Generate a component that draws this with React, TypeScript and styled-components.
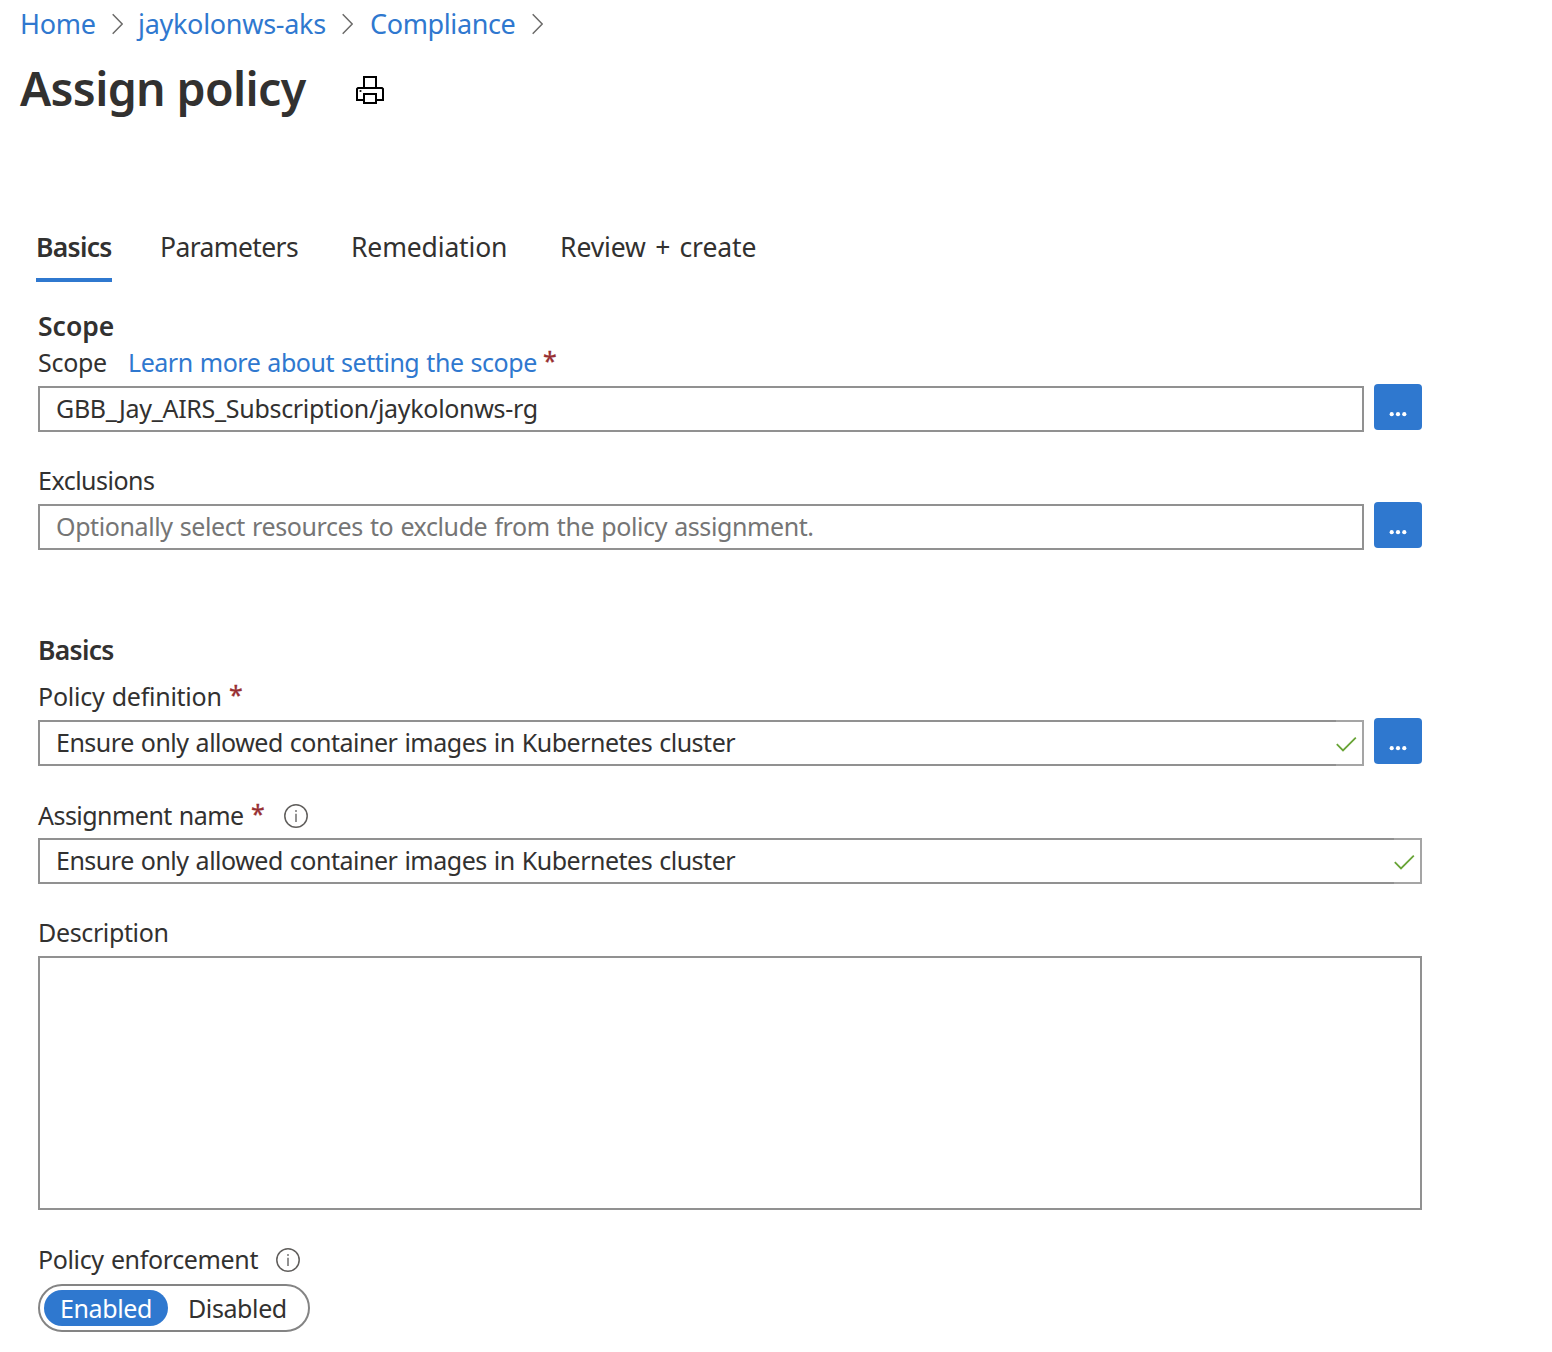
import React from 'react';
import styled, { createGlobalStyle } from 'styled-components';

const blue = '#2f78cf';
const ink = '#323130';

const GlobalStyle = createGlobalStyle`
  * { box-sizing: border-box; }
  body {
    margin: 0;
    background: #fff;
    color: ${ink};
    font-family: "Noto Sans", "Open Sans", sans-serif;
    font-size: 25px;
  }
`;

const Page = styled.main`
  width: 1552px;
  height: 1352px;
  overflow: hidden;
`;

const Breadcrumbs = styled.nav`
  display: flex;
  align-items: center;
  height: 48px;
  padding-left: 20px;
`;

const Crumb = styled.a<{ $width: number; $spacing?: number }>`
  width: ${p => p.$width}px;
  flex: none;
  color: ${blue};
  font-size: 27px;
  line-height: 48px;
  letter-spacing: ${p => p.$spacing ?? 0}px;
  white-space: nowrap;
`;

const Chevron = styled.svg<{ $gap: number }>`
  flex: none;
  width: 11px;
  height: 22px;
  margin-right: ${p => p.$gap}px;
  fill: none;
  stroke: #6b6a69;
  stroke-width: 1.5;
`;

const Header = styled.header`
  display: flex;
  align-items: center;
  height: 84px;
  padding-left: 20px;
`;

const Title = styled.h1`
  margin: 0;
  padding-bottom: 4px;
  width: 336px;
  font-size: 46.5px;
  font-weight: 600;
  line-height: 80px;
  letter-spacing: -0.65px;
  white-space: nowrap;
`;

const PrintIcon = styled.svg`
  width: 28px;
  height: 28px;
  fill: none;
  stroke: #000;
  stroke-width: 2;
`;

const TabList = styled.div`
  display: flex;
  margin-top: 92px;
  padding-left: 36px;
`;

const Tab = styled.div<{ $width: number; $gap: number; $spacing?: number; $active?: boolean }>`
  width: ${p => p.$width}px;
  height: 58px;
  margin-right: ${p => p.$gap}px;
  border-bottom: 4px solid ${p => (p.$active ? blue : 'transparent')};
  font-size: 26.5px;
  font-weight: ${p => (p.$active ? 600 : 400)};
  line-height: 46px;
  letter-spacing: ${p => p.$spacing ?? 0}px;
  word-spacing: 2.5px;
  white-space: nowrap;
`;

const Form = styled.section`
  width: 1422px;
  padding: 28px 0 0 38px;
`;

const Heading = styled.h2<{ $top?: number; $bottom?: number; $spacing?: number }>`
  margin: ${p => p.$top ?? 0}px 0 ${p => p.$bottom ?? 0}px;
  font-size: 26.5px;
  font-weight: 600;
  line-height: 33px;
  letter-spacing: ${p => p.$spacing ?? 0}px;
`;

const Label = styled.div<{ $top?: number; $bottom?: number; $spacing?: number }>`
  display: flex;
  align-items: center;
  height: 40px;
  margin-top: ${p => p.$top ?? 0}px;
  margin-bottom: ${p => p.$bottom ?? 4}px;
  line-height: 40px;
  letter-spacing: ${p => p.$spacing ?? -0.3}px;
  white-space: nowrap;
`;

const LabelText = styled.span<{ $width?: number }>`
  width: ${p => (p.$width ? `${p.$width}px` : 'auto')};
  word-spacing: 1px;
`;

const LearnMore = styled.a`
  width: 415px;
  color: ${blue};
  letter-spacing: -0.46px;
  word-spacing: 1px;
`;

const Required = styled.span`
  width: 14px;
  padding-bottom: 5px;
  color: #982f33;
  font-size: 25px;
  -webkit-text-stroke: 0.3px #982f33;
`;

const InfoSvg = styled.svg<{ $left: number }>`
  width: 24px;
  height: 24px;
  margin-top: 2px;
  margin-left: ${p => p.$left}px;
`;

const FieldRow = styled.div`
  display: flex;
  align-items: flex-start;
  gap: 10px;
  height: 46px;
`;

const Field = styled.div<{ $muted?: boolean; $spacing: number }>`
  display: flex;
  align-items: flex-start;
  justify-content: space-between;
  flex: 1;
  height: 46px;
  padding-left: 16px;
  border: 2px solid #919191;
  color: ${p => (p.$muted ? '#757575' : ink)};
  line-height: 40px;
  letter-spacing: ${p => p.$spacing}px;
  word-spacing: 1px;
  white-space: nowrap;
`;

const ValidMark = styled.span`
  display: flex;
  align-items: center;
  width: 28px;
  height: 46px;
  margin: -2px -2px -2px 0;
  padding-top: 1px;
  border: 2px solid #a5a5a5;
  border-left: 0;
  background: #fff;
`;

const BrowseButton = styled.button`
  display: flex;
  align-items: center;
  justify-content: center;
  width: 48px;
  height: 46px;
  margin-top: -2px;
  padding: 14px 0 0;
  border: 0;
  border-radius: 4px;
  background: ${blue};
`;

const DescriptionBox = styled.div`
  height: 254px;
  border: 2px solid #919191;
`;

const Toggle = styled.div`
  display: flex;
  align-items: center;
  width: 272px;
  height: 48px;
  padding-left: 4px;
  border: 2px solid #848484;
  border-radius: 24px;
`;

const Option = styled.span<{ $selected?: boolean }>`
  width: ${p => (p.$selected ? 124 : 138)}px;
  height: 36px;
  padding-left: ${p => (p.$selected ? 16 : 20)}px;
  border-radius: 18px;
  background: ${p => (p.$selected ? blue : 'transparent')};
  color: ${p => (p.$selected ? '#fff' : ink)};
  line-height: 37px;
  letter-spacing: -0.4px;
`;

const Separator = ({ gap = 15 }: { gap?: number }) => (
  <Chevron $gap={gap} viewBox="0 0 11 22">
    <path d="M.7 1.2 10.2 11 .7 20.8" />
  </Chevron>
);

const Info = ({ left }: { left: number }) => (
  <InfoSvg $left={left} viewBox="0 0 24 24" fill="none">
    <circle cx="12" cy="12" r="11.2" stroke="#605e5c" strokeWidth="1.5" />
    <path d="M12 9.8V18" stroke="#777" strokeWidth="1.6" />
    <circle cx="12" cy="7.1" r="1" fill="#777" />
  </InfoSvg>
);

const Valid = () => (
  <ValidMark>
    <svg width="21" height="16" viewBox="0 0 21 16" fill="none">
      <path d="M.8 8.2 7 14.4 19.8 1.6" stroke="#68a436" strokeWidth="1.8" />
    </svg>
  </ValidMark>
);

const Browse = () => (
  <BrowseButton aria-label="Browse">
    <svg width="18" height="6" viewBox="0 0 18 6" fill="#fff">
      <circle cx="2.7" cy="3.2" r="2.1" />
      <circle cx="9" cy="3.2" r="2.1" />
      <circle cx="15.3" cy="3.2" r="2.1" />
    </svg>
  </BrowseButton>
);

export default function App() {
  return (
    <Page>
      <GlobalStyle />
      <Breadcrumbs>
        <Crumb $width={92} $spacing={-0.3}>Home</Crumb>
        <Separator />
        <Crumb $width={204} $spacing={-0.3}>jaykolonws-aks</Crumb>
        <Separator gap={17} />
        <Crumb $width={162} $spacing={-0.38}>Compliance</Crumb>
        <Separator />
      </Breadcrumbs>
      <Header>
        <Title>Assign policy</Title>
        <PrintIcon viewBox="0 0 28 28">
          <path d="M8 12V1h12v11M8 24H1V13l1-1h24l1 1v11h-7" />
          <path d="M8 18h12v9H8z" />
          <path d="M3.6 15h1.8" strokeWidth="1.8" />
        </PrintIcon>
      </Header>
      <TabList>
        <Tab $active $width={76} $gap={48} $spacing={-0.7}>Basics</Tab>
        <Tab $width={138} $gap={53} $spacing={-0.6}>Parameters</Tab>
        <Tab $width={156} $gap={53} $spacing={-0.15}>Remediation</Tab>
        <Tab $width={198} $gap={0} $spacing={-0.1}>Review + create</Tab>
      </TabList>
      <Form>
        <Heading $bottom={-1}>Scope</Heading>
        <Label $bottom={4}>
          <LabelText $width={90}>Scope</LabelText>
          <LearnMore>Learn more about setting the scope</LearnMore>
          <Required>*</Required>
        </Label>
        <FieldRow>
          <Field $spacing={-0.3}>GBB_Jay_AIRS_Subscription/jaykolonws-rg</Field>
          <Browse />
        </FieldRow>

        <Label $top={28} $spacing={-0.5}>Exclusions</Label>
        <FieldRow>
          <Field $muted $spacing={-0.4}>
            Optionally select resources to exclude from the policy assignment.
          </Field>
          <Browse />
        </FieldRow>

        <Heading $top={84} $bottom={9} $spacing={-0.7}>Basics</Heading>
        <Label $spacing={-0.25}>
          <LabelText $width={191}>Policy definition</LabelText>
          <Required>*</Required>
        </Label>
        <FieldRow>
          <Field $spacing={-0.49}>
            Ensure only allowed container images in Kubernetes cluster
            <Valid />
          </Field>
          <Browse />
        </FieldRow>

        <Label $top={29} $bottom={3} $spacing={-0.53}>
          <LabelText $width={213}>Assignment name</LabelText>
          <Required>*</Required>
          <Info left={19} />
        </Label>
        <FieldRow>
          <Field $spacing={-0.49}>
            Ensure only allowed container images in Kubernetes cluster
            <Valid />
          </Field>
        </FieldRow>

        <Label $top={28} $spacing={-0.36}>Description</Label>
        <DescriptionBox />

        <Label $top={29} $bottom={5} $spacing={-0.36}>
          <LabelText $width={220}>Policy enforcement</LabelText>
          <Info left={18} />
        </Label>
        <Toggle>
          <Option $selected>Enabled</Option>
          <Option>Disabled</Option>
        </Toggle>
      </Form>
    </Page>
  );
}
